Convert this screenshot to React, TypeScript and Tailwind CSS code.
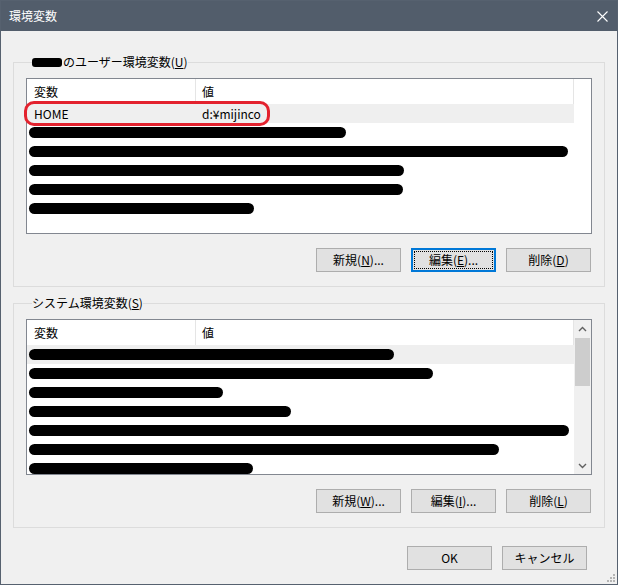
import React from "react";

const FONT = "font-['Noto_Sans_CJK_JP','Noto_Sans',sans-serif]";

function Btn({ children, focused }: { children: React.ReactNode; focused?: boolean }) {
  if (focused) {
    return (
      <div className="w-[85px] h-[24px] border-2 border-[#0078d7] bg-[#e1e1e1] p-[1px]">
        <div className="w-full h-full border border-dotted border-black flex items-center justify-center leading-none">
          {children}
        </div>
      </div>
    );
  }
  return (
    <div className="w-[85px] h-[24px] border border-[#adadad] bg-[#e1e1e1] flex items-center justify-center leading-none">
      {children}
    </div>
  );
}

function Chevron({ up }: { up?: boolean }) {
  return (
    <svg width="9" height="6" viewBox="0 0 9 6">
      <polyline
        points={up ? "1,5 4.5,1.5 8,5" : "1,1 4.5,4.5 8,1"}
        fill="none"
        stroke="#606060"
        strokeWidth="1.4"
      />
    </svg>
  );
}

function ListBox({
  rows,
  highlightFirst,
  first,
  scrollbar,
  annotate,
}: {
  rows: number[];
  highlightFirst?: boolean;
  first?: [string, string];
  scrollbar?: boolean;
  annotate?: boolean;
}) {
  return (
    <div className="relative mt-[8px]">
      <div className="h-[156px] border border-[#828790] bg-white flex overflow-hidden">
        <div className="flex-1 flex flex-col min-w-0">
          <div className="h-[25px] flex shrink-0">
            <div className="w-[169px] border-r border-[#e5e5e5] pl-[7px] flex items-center">変数</div>
            <div className="w-[378px] border-r border-[#e5e5e5] pl-[6px] flex items-center">値</div>
          </div>
          {first && (
            <div className="h-[19px] w-[547px] bg-[#efefef] flex items-center shrink-0">
              <div className="w-[169px] pl-[7px]">{first[0]}</div>
              <div className="pl-[6px]">{first[1]}</div>
            </div>
          )}
          {rows.map((w, i) => (
            <div
              key={i}
              className={
                "h-[19px] shrink-0 flex items-center " +
                (highlightFirst && i === 0 ? "w-[547px] bg-[#efefef]" : "")
              }
            >
              <div className="ml-[2px] h-[11px] rounded-full bg-black" style={{ width: w }} />
            </div>
          ))}
        </div>
        {scrollbar && (
          <div className="w-[17px] bg-[#f0f0f0] flex flex-col shrink-0">
            <div className="h-[17px] flex items-center justify-center">
              <Chevron up />
            </div>
            <div className="mt-[1px] mx-[1px] h-[48px] bg-[#cdcdcd]" />
            <div className="flex-1" />
            <div className="h-[17px] flex items-center justify-center">
              <Chevron />
            </div>
          </div>
        )}
      </div>
      {annotate && (
        <div className="absolute left-[-2px] top-[23px] w-[246px] h-[25px] border-[3px] border-[#e3222e] rounded-[10px]" />
      )}
    </div>
  );
}

function Group({
  legend,
  children,
  buttons,
  className,
}: {
  legend: React.ReactNode;
  children: React.ReactNode;
  buttons: React.ReactNode;
  className?: string;
}) {
  return (
    <fieldset className={"border border-[#dcdcdc] px-[12px] pb-[14px] " + (className ?? "")}>
      <legend className="ml-[6px] px-0 leading-[16px] flex items-center">{legend}</legend>
      {children}
      <div className="mt-[14px] flex justify-end gap-[10px] pr-[1px]">{buttons}</div>
    </fieldset>
  );
}

export default function App() {
  return (
    <div
      className={
        "relative w-[618px] h-[585px] border border-[#56616f] bg-[#f0f0f0] flex flex-col text-[12px] text-black " +
        FONT
      }
    >
      <div className="h-[30px] bg-[#525d6b] flex items-center justify-between pl-[8px] pr-[9px] text-white shrink-0">
        <span className="text-[12px]">環境変数</span>
        <svg width="11" height="11" viewBox="0 0 11 11">
          <path d="M0.5 0.5 L10.5 10.5 M10.5 0.5 L0.5 10.5" stroke="#ffffff" strokeWidth="1.1" />
        </svg>
      </div>
      <div className="flex flex-col px-[12px] pt-[23px]">
        <Group
          legend={
            <>
              <span className="inline-block w-[30px] h-[9px] rounded-[3px] bg-black mr-[1px]" />
              <span>
                のユーザー環境変数(<span className="underline">U</span>)
              </span>
            </>
          }
          buttons={
            <>
              <Btn>
                新規(<span className="underline">N</span>)...
              </Btn>
              <Btn focused>
                編集(<span className="underline">E</span>)...
              </Btn>
              <Btn>
                削除(<span className="underline">D</span>)
              </Btn>
            </>
          }
        >
          <ListBox first={["HOME", "d:¥mijinco"]} rows={[317, 539, 375, 374, 225]} annotate />
        </Group>
        <Group
          className="mt-[8px]"
          legend={
            <span>
              システム環境変数(<span className="underline">S</span>)
            </span>
          }
          buttons={
            <>
              <Btn>
                新規(<span className="underline">W</span>)...
              </Btn>
              <Btn>
                編集(<span className="underline">I</span>)...
              </Btn>
              <Btn>
                削除(<span className="underline">L</span>)
              </Btn>
            </>
          }
        >
          <ListBox rows={[365, 404, 194, 262, 540, 470, 224]} highlightFirst scrollbar />
        </Group>
        <div className="mt-[18px] flex justify-end gap-[10px] pr-[18px]">
          <Btn>OK</Btn>
          <Btn>キャンセル</Btn>
        </div>
      </div>
      <svg className="absolute right-[2px] bottom-[2px]" width="8" height="8" viewBox="0 0 8 8">
        <rect x="6" y="0" width="2" height="2" fill="#b4b4b4" />
        <rect x="3" y="3" width="2" height="2" fill="#b4b4b4" />
        <rect x="6" y="3" width="2" height="2" fill="#b4b4b4" />
        <rect x="0" y="6" width="2" height="2" fill="#b4b4b4" />
        <rect x="3" y="6" width="2" height="2" fill="#b4b4b4" />
        <rect x="6" y="6" width="2" height="2" fill="#b4b4b4" />
      </svg>
    </div>
  );
}
